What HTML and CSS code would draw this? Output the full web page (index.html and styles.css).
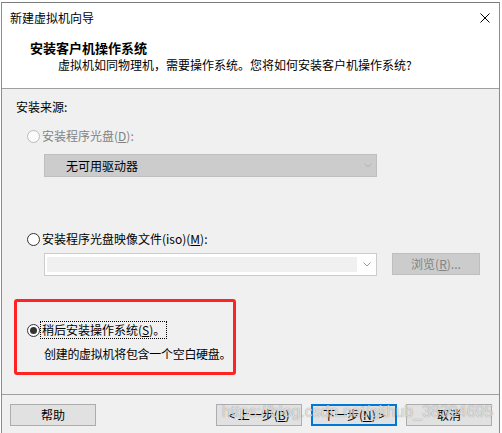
FILE: index.html
```html
<!DOCTYPE html>
<html lang="zh-CN">
<head>
<meta charset="utf-8">
<title>新建虚拟机向导</title>
<link rel="stylesheet" href="styles.css">
</head>
<body>
<div class="window">
  <div class="titlebar">
    <span class="title">新建虚拟机向导</span>
    <svg class="close" width="10" height="10" viewBox="0 0 10 10"><path d="M0.5 0.5 L9.5 9.5 M9.5 0.5 L0.5 9.5" stroke="#000" stroke-width="1" fill="none"/></svg>
  </div>
  <div class="header">
    <h1 class="header-title">安装客户机操作系统</h1>
    <p class="header-sub">虚拟机如同物理机，需要操作系统。您将如何安装客户机操作系统?</p>
  </div>
  <div class="content">
    <div class="section-label">安装来源:</div>

    <div class="option disabled">
      <span class="radio"></span>
      <span class="opt-label">安装程序光盘(<u>D</u>):</span>
    </div>
    <div class="dropdown">
      <span class="dropdown-text">无可用驱动器</span>
      <svg class="chev" width="8" height="5" viewBox="0 0 8 5"><path d="M0.5 0.5 L4 4 L7.5 0.5" stroke="#b4b4b4" fill="none"/></svg>
    </div>

    <div class="option second">
      <span class="radio"></span>
      <span class="opt-label">安装程序光盘映像文件(iso)(<u>M</u>):</span>
    </div>
    <div class="iso-row">
      <div class="combo">
        <div class="combo-field"></div>
        <div class="combo-arrow">
          <svg width="8" height="5" viewBox="0 0 8 5"><path d="M0.5 0.5 L4 4 L7.5 0.5" stroke="#9a9a9a" fill="none"/></svg>
        </div>
      </div>
      <div class="btn btn-disabled browse">浏览(<u>R</u>)...</div>
    </div>

    <div class="highlight">
      <div class="option checked">
        <span class="radio"><span class="dot"></span></span>
        <span class="opt-label focus">稍后安装操作系统(<u>S</u>)。</span>
      </div>
      <div class="desc">创建的虚拟机将包含一个空白硬盘。</div>
    </div>
  </div>
  <div class="footer">
    <div class="btn">帮助</div>
    <div class="spacer"></div>
    <div class="btn">&lt; 上一步(<u>B</u>)</div>
    <div class="btn btn-default">下一步(<u>N</u>) &gt;</div>
    <div class="btn">取消</div>
  </div>
</div>
<div class="watermark">https://blog.csdn.net/github_38394695</div>
</body>
</html>
```

FILE: styles.css
```css
* { box-sizing: border-box; }

html, body {
  margin: 0;
  padding: 0;
}

body {
  width: 502px;
  height: 433px;
  overflow: hidden;
  background: #ffffff;
  font-family: "Noto Sans CJK SC", "Microsoft YaHei", sans-serif;
  font-size: 12px;
  color: #000;
  position: relative;
}

.window {
  margin-top: 2px;
  margin-left: 1px;
  width: 499px;
  height: 431px;
  border-top: 1px solid #7d7d7d;
  border-left: 1px solid #8c8c8c;
  border-right: 1px solid #8c8c8c;
  display: flex;
  flex-direction: column;
  background: #f0f0f0;
}

.titlebar {
  height: 30px;
  flex: none;
  background: #fff;
  display: flex;
  align-items: center;
  justify-content: space-between;
  padding: 0 9px 0 8px;
}

.title {
  font-size: 12px;
  line-height: 16px;
}

.close { display: block; }

.header {
  flex: none;
  height: 56px;
  background: #fff;
  border-bottom: 1px solid #a0a0a0;
  padding: 7px 0 0 28px;
}

.header-title {
  margin: 0;
  font-size: 13px;
  font-weight: bold;
  line-height: 16px;
}

.header-sub {
  margin: 1px 0 0 28px;
  font-size: 12px;
  line-height: 16px;
}

.content {
  flex: 1;
  padding: 10px 0 0 0;
}

.section-label {
  line-height: 16px;
  padding-left: 14px;
}

.option {
  display: flex;
  align-items: center;
  height: 16px;
  margin-top: 13px;
  padding-left: 25px;
}

.option.second { margin-top: 54px; }

.radio {
  width: 13px;
  height: 13px;
  border-radius: 50%;
  border: 1px solid #333;
  background: #fff;
  flex: none;
  display: flex;
  align-items: center;
  justify-content: center;
}

.disabled .radio {
  border-color: #bcbcbc;
  background: #fbfbfb;
}

.dot {
  width: 7px;
  height: 7px;
  border-radius: 50%;
  background: #333;
}

.opt-label {
  margin-left: 2px;
  line-height: 16px;
  white-space: nowrap;
}

.disabled .opt-label { color: #838383; }

.dropdown {
  margin: 10px 0 0 42px;
  width: 333px;
  height: 23px;
  background: #cccccc;
  border: 1px solid #bfbfbf;
  display: flex;
  align-items: center;
  justify-content: space-between;
  padding: 0 4px 0 21px;
}

.dropdown-text { line-height: 16px; }

.chev { display: block; }

.iso-row {
  display: flex;
  align-items: flex-start;
  margin: 6px 0 0 42px;
  gap: 15px;
}

.combo {
  width: 333px;
  height: 23px;
  background: #fff;
  border: 1px solid #cccccc;
  padding: 3px 0 3px 2px;
  display: flex;
}

.combo-field {
  flex: 1;
  background: #f0f0f0;
}

.combo-arrow {
  width: 19px;
  display: flex;
  align-items: center;
  justify-content: center;
}

.combo-arrow svg { display: block; }

.btn {
  width: 86px;
  height: 22px;
  background: #e1e1e1;
  border: 1px solid #adadad;
  display: flex;
  align-items: center;
  justify-content: center;
  line-height: 16px;
  flex: none;
  white-space: nowrap;
}

.btn-disabled {
  background: #cccccc;
  border-color: #bfbfbf;
  color: #838383;
}

.browse { width: 88px; }

.btn-default {
  border: 2px solid #0078d7;
}

.highlight {
  margin: 23px 0 0 12px;
  width: 222px;
  height: 76px;
  border: 3px solid #ff2323;
  border-radius: 3px;
  padding: 20px 0 0 10px;
}

.highlight .option {
  margin-top: 0;
  padding-left: 0;
}

.focus {
  outline: 1px dotted #000;
  outline-offset: 0;
  padding: 0 1px;
  margin-left: 1px;
}

.desc {
  margin: 8px 0 0 17px;
  line-height: 16px;
  white-space: nowrap;
  letter-spacing: -0.3px;
}

.footer {
  flex: none;
  height: 39px;
  border-top: 1px solid #a0a0a0;
  padding: 9px 7px 0 8px;
  display: flex;
  align-items: flex-start;
  gap: 9px;
}

.spacer { flex: 1; }

u { text-decoration: underline; text-underline-offset: 1px; }

.watermark {
  position: absolute;
  left: 222px;
  top: 403px;
  font-family: "Liberation Sans", Arial, sans-serif;
  font-size: 16px;
  line-height: 18px;
  color: rgba(255, 255, 255, 0.7);
  text-shadow: 0 0 1px rgba(0, 0, 0, 0.45);
  white-space: nowrap;
  pointer-events: none;
}
```
